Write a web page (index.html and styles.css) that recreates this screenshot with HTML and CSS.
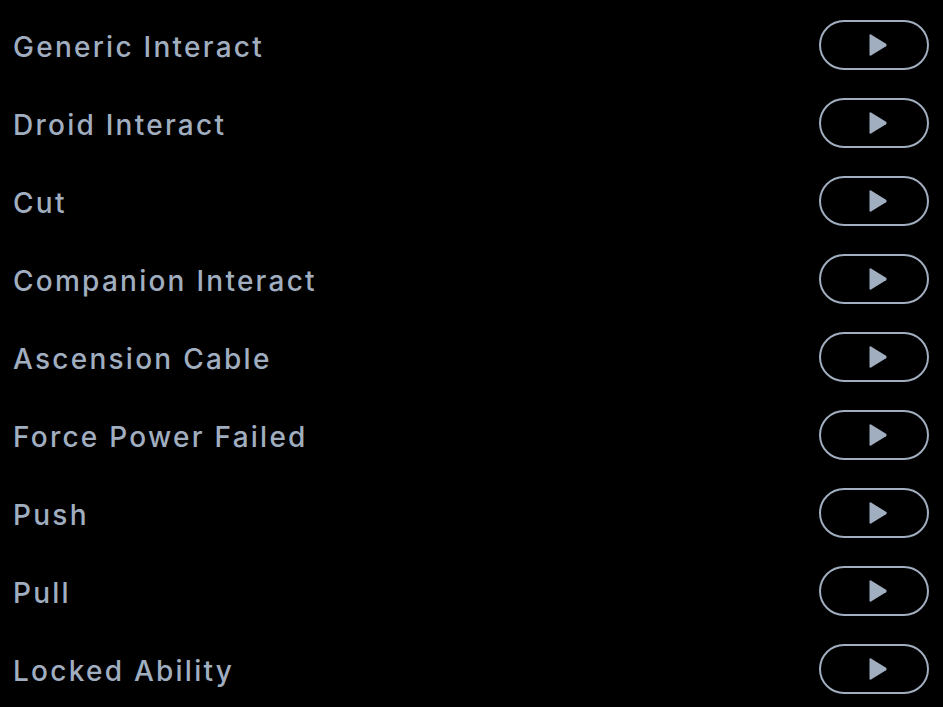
FILE: index.html
```html
<!DOCTYPE html>
<html>
<head>
<meta charset="utf-8">
<link rel="stylesheet" href="styles.css">
</head>
<body>
<ul class="list">
  <li class="row"><span class="label">Generic Interact</span><button class="play"><svg viewBox="0 0 20 24" width="20" height="24"><path d="M3 1.5 L18 10.8 Q19.6 12 18 13.2 L3 22.5 Q1.5 23.3 1.5 21.5 V2.5 Q1.5 0.7 3 1.5 Z"/></svg></button></li>
  <li class="row"><span class="label">Droid Interact</span><button class="play"><svg viewBox="0 0 20 24" width="20" height="24"><path d="M3 1.5 L18 10.8 Q19.6 12 18 13.2 L3 22.5 Q1.5 23.3 1.5 21.5 V2.5 Q1.5 0.7 3 1.5 Z"/></svg></button></li>
  <li class="row"><span class="label">Cut</span><button class="play"><svg viewBox="0 0 20 24" width="20" height="24"><path d="M3 1.5 L18 10.8 Q19.6 12 18 13.2 L3 22.5 Q1.5 23.3 1.5 21.5 V2.5 Q1.5 0.7 3 1.5 Z"/></svg></button></li>
  <li class="row"><span class="label">Companion Interact</span><button class="play"><svg viewBox="0 0 20 24" width="20" height="24"><path d="M3 1.5 L18 10.8 Q19.6 12 18 13.2 L3 22.5 Q1.5 23.3 1.5 21.5 V2.5 Q1.5 0.7 3 1.5 Z"/></svg></button></li>
  <li class="row"><span class="label">Ascension Cable</span><button class="play"><svg viewBox="0 0 20 24" width="20" height="24"><path d="M3 1.5 L18 10.8 Q19.6 12 18 13.2 L3 22.5 Q1.5 23.3 1.5 21.5 V2.5 Q1.5 0.7 3 1.5 Z"/></svg></button></li>
  <li class="row"><span class="label">Force Power Failed</span><button class="play"><svg viewBox="0 0 20 24" width="20" height="24"><path d="M3 1.5 L18 10.8 Q19.6 12 18 13.2 L3 22.5 Q1.5 23.3 1.5 21.5 V2.5 Q1.5 0.7 3 1.5 Z"/></svg></button></li>
  <li class="row"><span class="label">Push</span><button class="play"><svg viewBox="0 0 20 24" width="20" height="24"><path d="M3 1.5 L18 10.8 Q19.6 12 18 13.2 L3 22.5 Q1.5 23.3 1.5 21.5 V2.5 Q1.5 0.7 3 1.5 Z"/></svg></button></li>
  <li class="row"><span class="label">Pull</span><button class="play"><svg viewBox="0 0 20 24" width="20" height="24"><path d="M3 1.5 L18 10.8 Q19.6 12 18 13.2 L3 22.5 Q1.5 23.3 1.5 21.5 V2.5 Q1.5 0.7 3 1.5 Z"/></svg></button></li>
  <li class="row"><span class="label">Locked Ability</span><button class="play"><svg viewBox="0 0 20 24" width="20" height="24"><path d="M3 1.5 L18 10.8 Q19.6 12 18 13.2 L3 22.5 Q1.5 23.3 1.5 21.5 V2.5 Q1.5 0.7 3 1.5 Z"/></svg></button></li>
</ul>
</body>
</html>
```
FILE: styles.css
```css
html, body {
  margin: 0;
  padding: 0;
  background: #000;
}
.list {
  list-style: none;
  margin: 0;
  padding: 6px 14px 0 13px;
}
.row {
  display: flex;
  align-items: center;
  justify-content: space-between;
  height: 78px;
}
.label {
  font-family: Inter, "Noto Sans", sans-serif;
  font-size: 28px;
  font-weight: 500;
  letter-spacing: 2.25px;
  color: #a0aec0;
  padding-top: 3px;
}
.play {
  box-sizing: border-box;
  width: 110px;
  height: 50px;
  border: 2px solid #a0aec0;
  border-radius: 25px;
  background: transparent;
  display: flex;
  align-items: center;
  justify-content: center;
  padding: 0;
}
.play svg {
  display: block;
  fill: #a0aec0;
  margin-left: 7px;
}
```
